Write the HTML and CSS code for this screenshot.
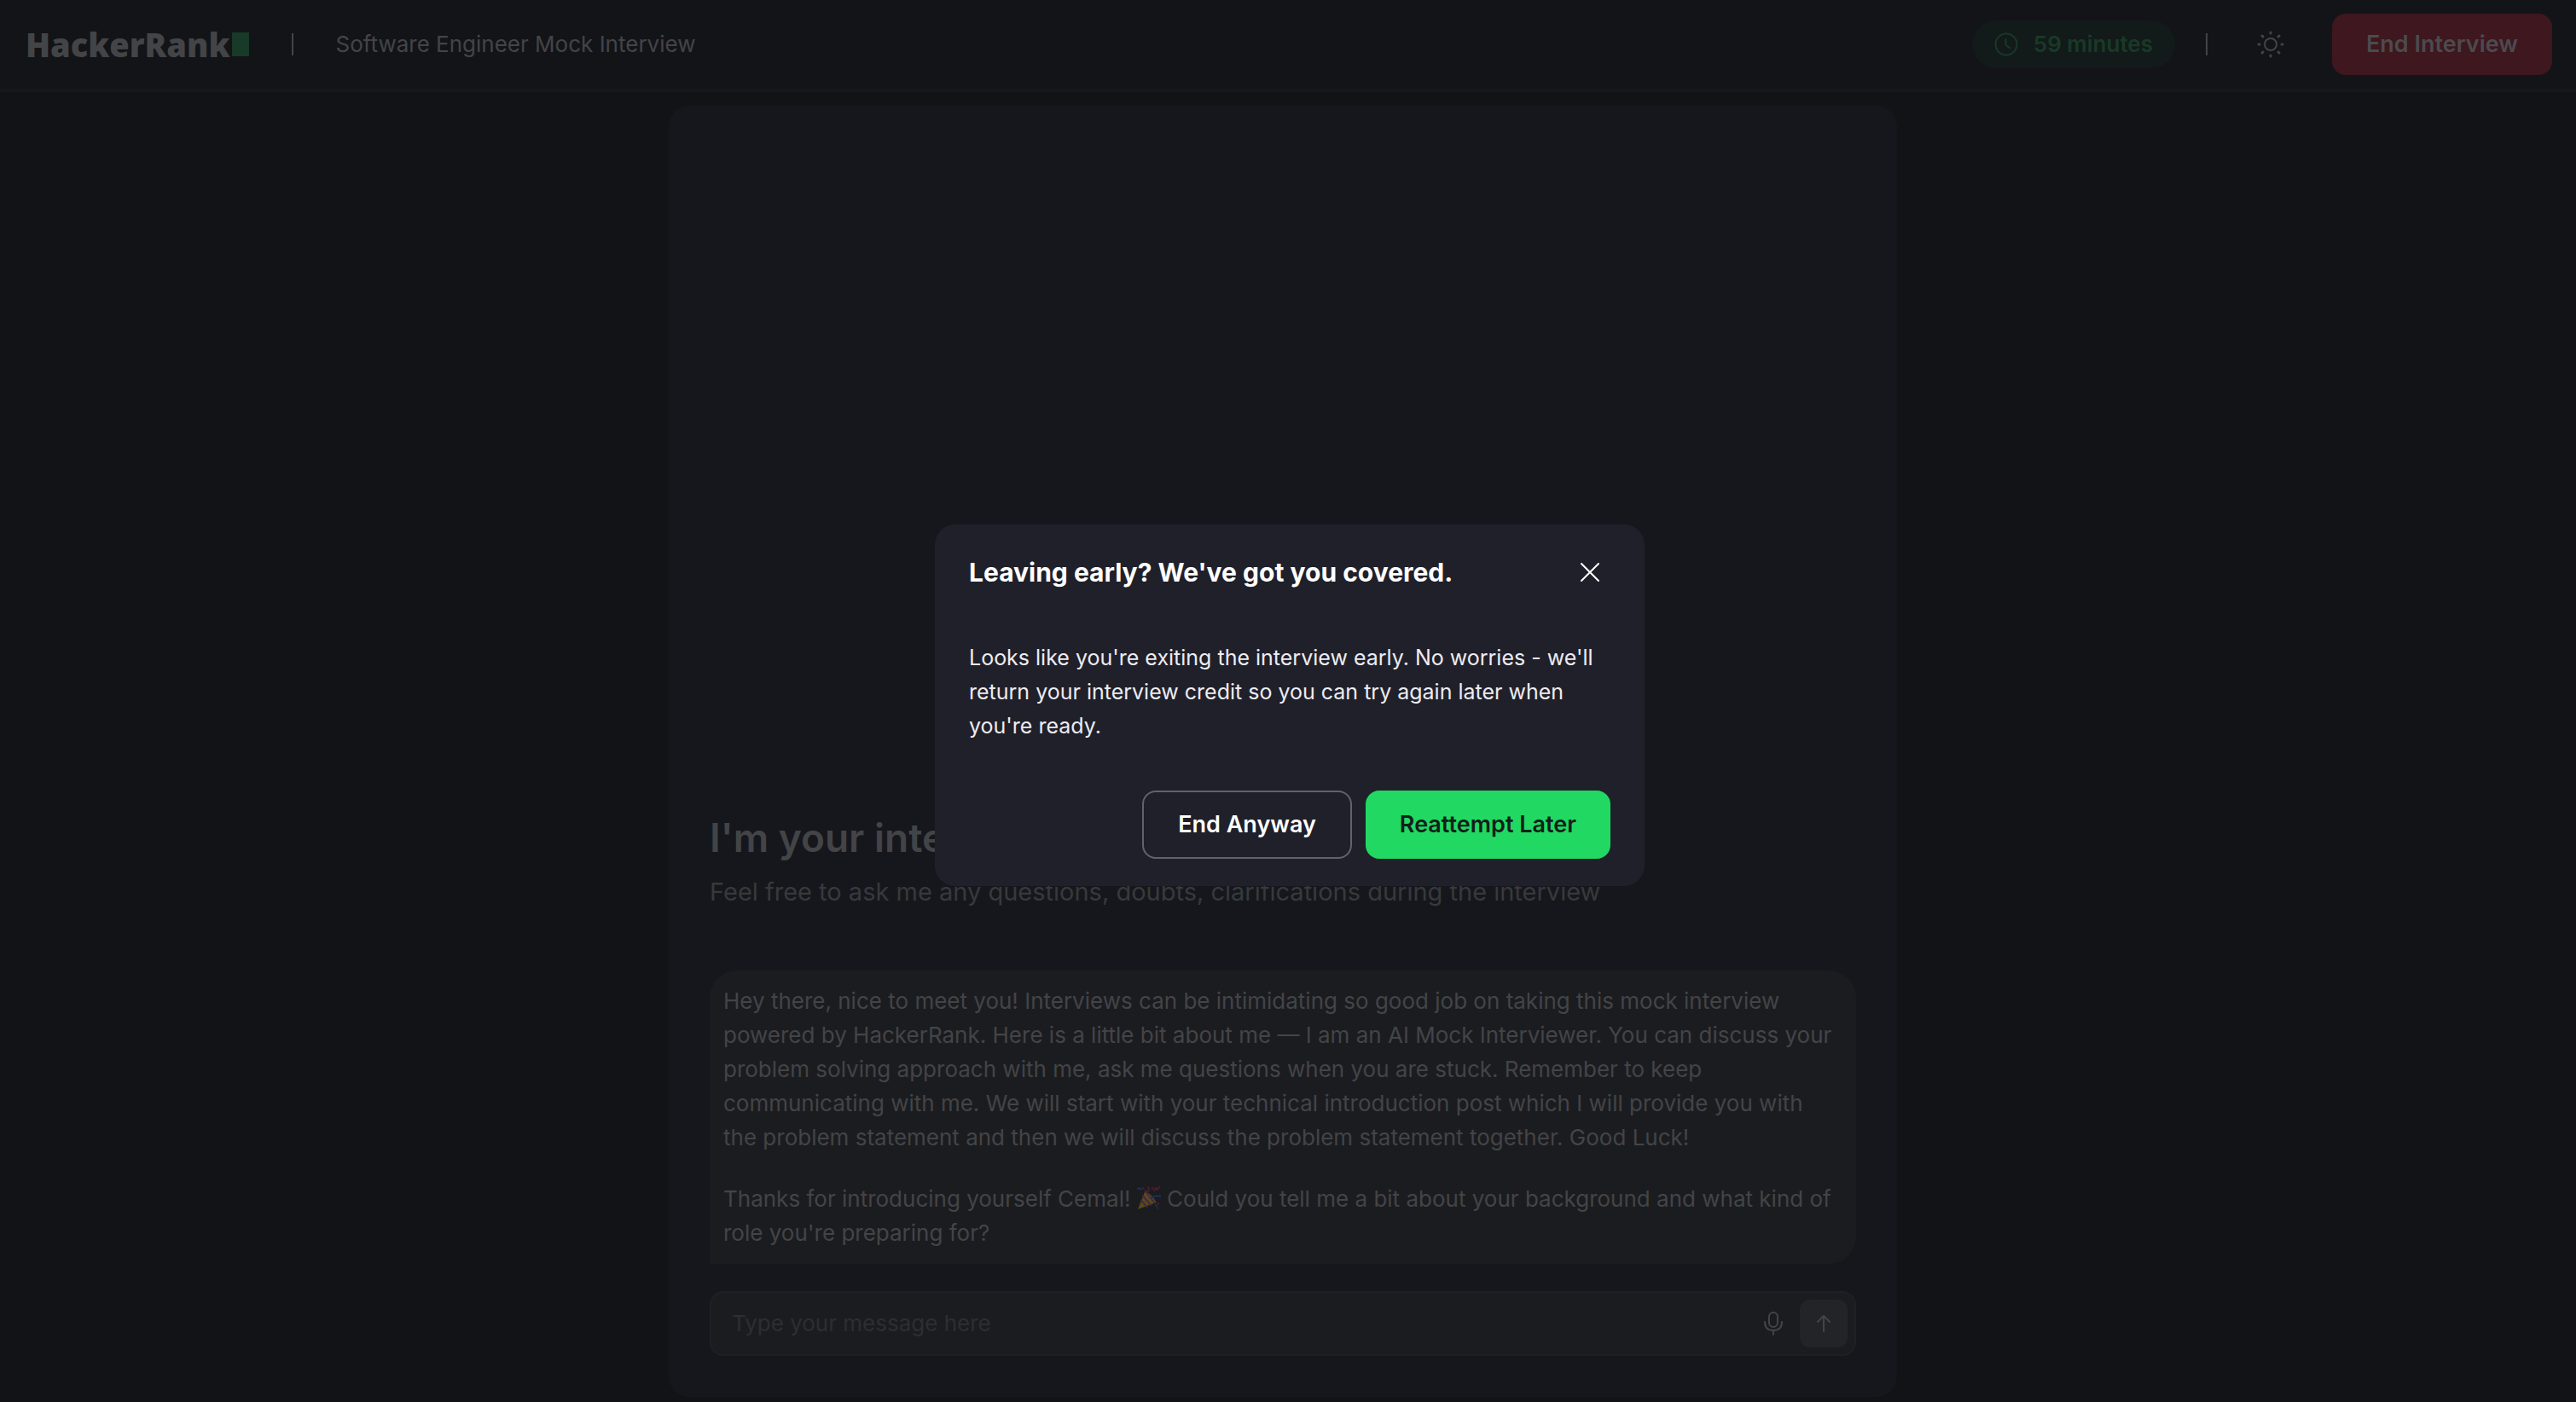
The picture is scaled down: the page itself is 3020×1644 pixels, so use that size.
FILE: index.html
```html
<!DOCTYPE html>
<html lang="en">
<head>
  <meta charset="UTF-8" />
  <meta name="viewport" content="width=device-width, initial-scale=1.0" />
  <title>Software Engineer Mock Interview</title>
  <link rel="stylesheet" href="styles.css">
</head>
<body>
  <header class="topbar">
    <div class="topbar-left">
      <a class="logo" href="#">HackerRank<span class="logo-block"></span></a>
      <span class="divider"></span>
      <h1 class="page-title">Software Engineer Mock Interview</h1>
    </div>
    <div class="topbar-right">
      <div class="timer">
        <svg class="icon-clock" viewBox="0 0 28 28" aria-hidden="true">
          <circle cx="14" cy="14" r="12.500" />
          <path d="M13.500 8v7l5 3.500" />
        </svg>
        <span>59 minutes</span>
      </div>
      <span class="divider"></span>
      <button class="theme-button" type="button" aria-label="Toggle theme">
        <svg class="icon-sun" viewBox="0 0 32 32" aria-hidden="true">
          <circle cx="16" cy="16" r="7" />
          <path d="M16 2v1M16 29v1M2 16h1M29 16h1M6 6l1 1M25 25l1 1M6 26l1-1M25 7l1-1" />
        </svg>
      </button>
      <button class="end-button" type="button">End Interview</button>
    </div>
  </header>

  <main class="content">
    <section class="chat">
      <h2 class="chat-title">I'm your interviewer</h2>
      <p class="chat-subtitle">Feel free to ask me any questions, doubts, clarifications during the interview</p>

      <div class="message">
        <p>Hey there, nice to meet you! Interviews can be intimidating so good job on taking this mock interview powered by HackerRank. Here is a little bit about me — I am an AI Mock Interviewer. You can discuss your problem solving approach with me, ask me questions when you are stuck. Remember to keep communicating with me. We will start with your technical introduction post which I will provide you with the problem statement and then we will discuss the problem statement together. Good Luck!</p>
        <p>Thanks for introducing yourself Cemal!
          <svg class="icon-party" viewBox="0 0 28 28" role="img" aria-label="Party popper">
            <path class="cone" d="M1 27L9.500 5.500Q18 10 22.500 19Z" />
            <path class="stripe" d="M7 11.500L16 22M5 17l6.500 7M10 6l10 13" />
            <path class="red" d="M12 7q3-3 1-6M20 5l2-3 1 2 3-3M7 2l1 1" />
            <path class="blue" d="M1 3q3-2 4 1M17 14q4-4 11-2M22 22l1 1" />
            <path class="red" d="M25 20v1M24 25v1M18 2v1" />
          </svg>
          Could you tell me a bit about your background and what kind of role you're preparing for?</p>
      </div>

      <form class="composer">
        <input class="composer-input" type="text" placeholder="Type your message here" aria-label="Message" />
        <button class="mic-button" type="button" aria-label="Record voice">
          <svg class="icon-mic" viewBox="0 0 22 28" aria-hidden="true">
            <rect x="6" y="1" width="10" height="17" rx="5" />
            <path d="M1 12q0 10 10 10t10-10M11 22v5" />
          </svg>
        </button>
        <button class="send-button" type="submit" aria-label="Send">
          <svg class="icon-send" viewBox="0 0 18 20" aria-hidden="true">
            <path d="M9 19V1M2 8l7-7 7 7" />
          </svg>
        </button>
      </form>
    </section>
  </main>

  <div class="overlay">
    <div class="modal" role="dialog" aria-modal="true" aria-labelledby="modal-title">
      <div class="modal-header">
        <h2 class="modal-title" id="modal-title">Leaving early? We've got you covered.</h2>
        <button class="close-button" type="button" aria-label="Close">
          <svg class="icon-close" viewBox="0 0 24 24" aria-hidden="true">
            <path d="M2 2l20 20M22 2L2 22" />
          </svg>
        </button>
      </div>
      <p class="modal-text">Looks like you're exiting the interview early. No worries - we'll return your interview credit so you can try again later when you're ready.</p>
      <div class="modal-actions">
        <button class="btn btn-outline" type="button">End Anyway</button>
        <button class="btn btn-primary" type="button">Reattempt Later</button>
      </div>
    </div>
  </div>
</body>
</html>
```

FILE: styles.css
```css
* {
  box-sizing: border-box;
}

body {
  margin: 0;
  min-height: 100vh;
  display: flex;
  flex-direction: column;
  font-family: Inter, "Liberation Sans", sans-serif;
  font-size: 26px;
  line-height: 40px;
  background-color: #121317;
  color: #434447;
}

h1,
h2,
p {
  margin: 0;
}

button {
  font: inherit;
  color: inherit;
  border: none;
  background: none;
  padding: 0;
  cursor: pointer;
}

svg {
  display: block;
  fill: none;
  stroke: currentColor;
  stroke-width: 2;
  stroke-linecap: round;
  stroke-linejoin: round;
}

/* Top bar */
.topbar {
  display: flex;
  justify-content: space-between;
  align-items: center;
  height: 108px;
  padding: 0 28px 0 30px;
  background-color: #131418;
  border-bottom: 4px solid #16171a;
}

.topbar-left,
.topbar-right {
  display: flex;
  align-items: center;
}

.topbar-left {
  gap: 50px;
}

.logo {
  display: flex;
  align-items: center;
  gap: 2px;
  font-family: "Noto Sans", sans-serif;
  font-size: 38px;
  font-weight: 900;
  color: #434447;
  text-decoration: none;
}

.logo-block {
  width: 20px;
  height: 28px;
  background-color: #183a29;
}

.divider {
  width: 2px;
  height: 26px;
  background-color: #434447;
}

.page-title {
  font-size: 26px;
  font-weight: 400;
}

.timer {
  display: flex;
  align-items: center;
  gap: 18px;
  height: 56px;
  padding: 0 26px;
  border-radius: 28px;
  background-color: #131a1a;
  color: #183a27;
  font-weight: 600;
}

.icon-clock {
  width: 28px;
  height: 28px;
}

.topbar-right .divider {
  margin: 0 42px 0 36px;
}

.theme-button {
  padding: 16px;
  margin-right: 40px;
}

.icon-sun {
  width: 32px;
  height: 32px;
  stroke-width: 3;
}

.icon-sun circle {
  stroke-width: 2;
}

.end-button {
  height: 72px;
  padding: 0 40px;
  border-radius: 16px;
  background-color: #3e171f;
  color: #4b4b4e;
  font-size: 27px;
  font-weight: 600;
}

/* Chat panel */
.content {
  flex: 1;
  display: flex;
  justify-content: center;
  padding: 16px 12px 6px 0;
}

.chat {
  display: flex;
  flex-direction: column;
  justify-content: flex-end;
  width: 1440px;
  max-width: 100%;
  padding: 48px;
  border-radius: 24px;
  background-color: #16171c;
}

.chat-title {
  font-size: 46px;
  line-height: 64px;
  font-weight: 600;
}

.chat-subtitle {
  margin-top: 8px;
  font-size: 29px;
  line-height: 48px;
  color: #38393c;
}

.message {
  display: flex;
  flex-direction: column;
  gap: 32px;
  margin-top: 68px;
  padding: 16px 24px 16px 16px;
  border-radius: 32px 32px 32px 0;
  background-color: #1b1c20;
}

.icon-party {
  display: inline-block;
  width: 28px;
  height: 28px;
  vertical-align: -4px;
}

.icon-party .cone {
  fill: #5a4a18;
  stroke: none;
}

.icon-party .stripe {
  stroke: #43294a;
}

.icon-party .red {
  stroke: #4c1c2a;
}

.icon-party .blue {
  stroke: #1d3159;
}

.composer {
  display: flex;
  align-items: center;
  height: 76px;
  margin-top: 32px;
  padding: 0 8px 0 24px;
  border: 2px solid #1f2024;
  border-radius: 16px;
  background-color: #1b1c20;
}

.composer-input {
  flex: 1;
  min-width: 0;
  padding: 0;
  border: none;
  outline: none;
  background: none;
  font: inherit;
  color: inherit;
}

.composer-input::placeholder {
  color: #2d2e31;
  opacity: 1;
}

.mic-button {
  margin-right: 20px;
}

.icon-mic {
  width: 22px;
  height: 28px;
}

.send-button {
  display: flex;
  align-items: center;
  justify-content: center;
  width: 56px;
  height: 56px;
  border-radius: 12px;
  background-color: #232428;
}

.icon-send {
  width: 18px;
  height: 20px;
}

/* Leave dialog */
.overlay {
  position: fixed;
  inset: 0;
  display: flex;
  align-items: center;
  justify-content: center;
  padding: 10px 0 0 4px;
}

.modal {
  width: 832px;
  max-width: 100%;
  padding: 32px 40px;
  border-radius: 24px;
  background-color: #20202a;
  color: #fff;
}

.modal-header {
  display: flex;
  align-items: center;
  justify-content: space-between;
  height: 48px;
}

.modal-title {
  font-size: 30px;
  font-weight: 700;
}

.close-button {
  padding: 12px;
}

.icon-close {
  width: 24px;
  height: 24px;
}

.modal-text {
  margin-top: 56px;
  font-size: 25px;
  color: #ececf2;
}

.modal-actions {
  display: flex;
  justify-content: flex-end;
  gap: 16px;
  margin-top: 56px;
}

.btn {
  height: 80px;
  padding: 0 40px;
  border-radius: 16px;
  font-size: 27px;
  font-weight: 600;
}

.btn-outline {
  border: 2px solid #62626e;
}

.btn-primary {
  background-color: #21d962;
  color: #13201a;
}
```
